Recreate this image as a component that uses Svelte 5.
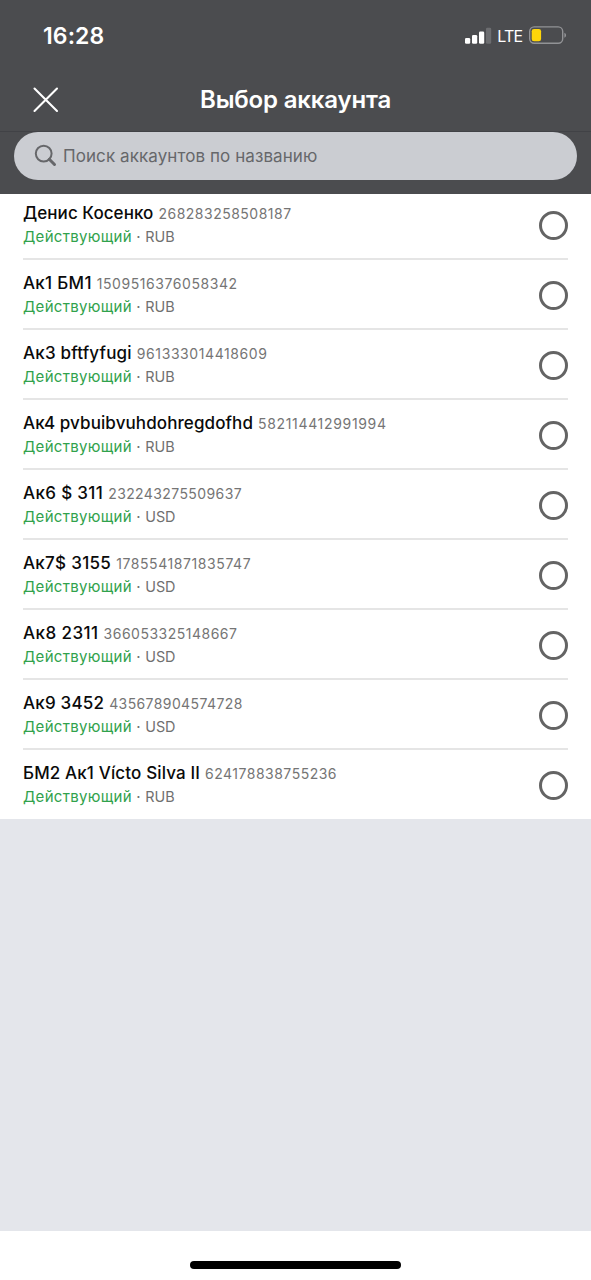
<script>
  const accounts = [
    { name: 'Денис Косенко', id: '268283258508187', currency: 'RUB', nameTracking: 0.06, idTracking: 0.5 },
    { name: 'Ак1 БМ1', id: '1509516376058342', currency: 'RUB', nameTracking: 0.3, idTracking: 0.56 },
    { name: 'Ак3 bftfyfugi', id: '961333014418609', currency: 'RUB', nameTracking: 0.19, idTracking: 0.59 },
    { name: 'Ак4 pvbuibvuhdohregdofhd', id: '582114412991994', currency: 'RUB', nameTracking: 0.1, idTracking: 0.67 },
    { name: 'Ак6 $ 311', id: '232243275509637', currency: 'USD', nameTracking: 0.35, idTracking: 0.4 },
    { name: 'Ак7$ 3155', id: '1785541871835747', currency: 'USD', nameTracking: 0.3, idTracking: 0.58 },
    { name: 'Ак8 2311', id: '366053325148667', currency: 'USD', nameTracking: 0.45, idTracking: 0.5 },
    { name: 'Ак9 3452', id: '435678904574728', currency: 'USD', nameTracking: 0.2, idTracking: 0.4 },
    { name: 'БМ2 Ак1 Vícto Silva II', id: '624178838755236', currency: 'RUB', nameTracking: 0.14, idTracking: 0.5 }
  ];
</script>

<div class="screen">
  <header>
    <div class="status">
      <span class="time">16:28</span>
      <div class="indicators">
        <svg class="signal" width="27" height="18" viewBox="0 0 27 18">
          <rect x="0" y="11" width="5.2" height="5.8" rx="1.3" fill="#fff" />
          <rect x="7" y="8" width="5.2" height="8.8" rx="1.3" fill="#fff" />
          <rect x="14" y="4.5" width="5.2" height="12.3" rx="1.3" fill="#fff" />
          <rect x="21" y="0.8" width="5.2" height="16" rx="1.3" fill="#6c6d70" />
        </svg>
        <span class="lte">LTE</span>
        <svg class="battery" width="38" height="19" viewBox="0 0 38 19">
          <rect x="0.7" y="0.9" width="33" height="16.4" rx="4.5" fill="none" stroke="#929396" stroke-width="1.4" />
          <rect x="2.7" y="3" width="9.4" height="12.2" rx="2.3" fill="#ffd60a" />
          <path d="M35.4 6.7c2.200 .7 2.200 4.300 0 5z" fill="#929396" />
        </svg>
      </div>
    </div>
    <div class="titlebar">
      <button class="close" aria-label="Закрыть">
        <svg width="26" height="26" viewBox="0 0 26 26">
          <path d="M1.500 1.500 24 24M24 1.500 1.500 24" stroke="#fff" stroke-width="2.100" stroke-linecap="round" />
        </svg>
      </button>
      <h1>Выбор аккаунта</h1>
    </div>
    <div class="searchbar">
      <div class="field">
        <svg width="24" height="24" viewBox="0 0 24 24">
          <circle cx="9.700" cy="9.600" r="7.900" fill="none" stroke="#66676a" stroke-width="2" />
          <path d="M15.300 15.300 20.500 20.500" stroke="#66676a" stroke-width="3" stroke-linecap="round" />
        </svg>
        <span>Поиск аккаунтов по названию</span>
      </div>
    </div>
  </header>

  <ul>
    {#each accounts as account}
      <li>
        <div class="info">
          <div class="line"><span class="name" style:letter-spacing="{account.nameTracking}px">{account.name}</span><span class="id" style:letter-spacing="{account.idTracking}px">{account.id}</span></div>
          <div class="line sub"><span class="state">Действующий</span><span class="dot">·</span><span class="currency">{account.currency}</span></div>
        </div>
        <span class="radio"></span>
      </li>
    {/each}
  </ul>

  <div class="rest"></div>
  <footer><div class="home"></div></footer>
</div>

<style>
  :global(body) { margin: 0; }
  .screen {
    width: 591px;
    height: 1280px;
    display: flex;
    flex-direction: column;
    overflow: hidden;
    background: #fff;
    font-family: Inter, "Noto Sans", sans-serif;
  }
  header { height: 194px; flex: none; background: #4b4c4f; color: #fff; }
  .status {
    height: 71px;
    box-sizing: border-box;
    display: flex;
    justify-content: space-between;
    padding: 0 24px 0 43px;
    align-items: center;
  }
  .time { font-size: 23px; font-weight: 600; letter-spacing: 0.1px; }
  .indicators { display: flex; align-items: center; }
  .lte { font-size: 16px; letter-spacing: -0.7px; margin: 0 6.5px 0 5px; }
  .signal, .battery { display: block; }
  .titlebar {
    height: 61px;
    box-sizing: border-box;
    border-bottom: 1px solid #414246;
    display: grid;
    grid-template-columns: 90px 1fr 90px;
    align-items: center;
    padding-bottom: 2px;
  }
  .close { border: 0; padding: 0 0 0 33px; background: none; display: block; line-height: 0; text-align: left; }
  h1 { margin: 0; font-size: 24px; font-weight: 600; text-align: center; line-height: 30px; letter-spacing: -0.18px; white-space: nowrap; }
  .searchbar { padding: 0 14px; }
  .field {
    height: 48px;
    border-radius: 24px;
    background: #cbcdd2;
    display: flex;
    align-items: center;
    padding-left: 20px;
    gap: 5px;
    color: #66676a;
    font-size: 17px;
    letter-spacing: 0.08px;
  }
  ul { list-style: none; margin: 0; padding: 0 23px; }
  li {
    height: 70px;
    box-sizing: border-box;
    padding-top: 2px;
    border-bottom: 2px solid #e5e5e5;
    display: flex;
    justify-content: space-between;
    align-items: center;
  }
  li:first-child { height: 66px; padding: 0 0 2px; }
  li:last-child { height: 69px; padding-top: 1px; border-bottom: 0; }
  .line { display: flex; align-items: baseline; height: 24px; line-height: 24px; white-space: nowrap; }
  .name { font-size: 17px; font-weight: 500; color: #0a0a0a; margin-right: 5px; }
  .id { font-size: 14px; color: #757575; }
  .sub { font-size: 15px; color: #707070; }
  .state { color: #31a24c; letter-spacing: 0.3px; }
  .dot { margin: 0 4.5px; }
  .currency { font-size: 14.400px; }
  .radio { width: 29px; height: 29px; box-sizing: border-box; border: 3px solid #646464; border-radius: 50%; }
  .rest { flex: 1; background: #e4e6eb; }
  footer { height: 49px; flex: none; background: #fff; display: flex; justify-content: center; align-items: flex-start; }
  .home { width: 211px; height: 8px; border-radius: 4px; background: #000; margin-top: 30px; }
</style>
